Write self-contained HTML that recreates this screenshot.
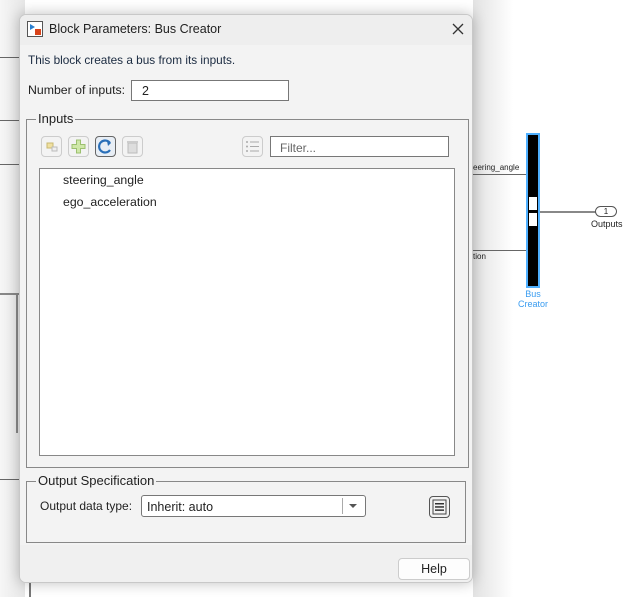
<!DOCTYPE html>
<html><head><meta charset="utf-8"><style>
*{box-sizing:border-box;margin:0;padding:0}
body{width:637px;height:597px;background:#fff;position:relative;overflow:hidden;font-family:"Liberation Sans",sans-serif;font-size:12px;color:#222}
.a{position:absolute}
.ln{position:absolute;background:#777}
.dlg{position:absolute;left:19px;top:14px;width:454px;height:569px;background:#f3f3f3;border:1px solid #c8c8c8;border-radius:7px;box-shadow:0 0 14px rgba(0,0,0,.25);overflow:hidden}
.title{position:absolute;left:0;top:0;width:100%;height:30px;background:#eeeeee}
.grp{position:absolute;border:1px solid #888}
.leg{position:absolute;background:#f3f3f3;font-size:13px;padding:0 2px;color:#222}
.inp{position:absolute;background:#fff;border:1px solid #777}
.tb{position:absolute;top:0;width:21px;height:21px;border:1px solid #ccc;border-radius:4px;background:#f3f3f3}
</style></head><body>
<div class="a" style="left:0;top:0;width:25px;height:597px;background:linear-gradient(90deg,#f6f6f6,#e6e6e6)"></div>
<div class="ln" style="left:0;top:57px;width:19px;height:1px;background:#666"></div>
<div class="ln" style="left:0;top:120px;width:19px;height:1px;background:#666"></div>
<div class="ln" style="left:0;top:164px;width:19px;height:1px;background:#666"></div>
<div class="ln" style="left:0;top:293px;width:19px;height:2px;background:#888"></div>
<div class="ln" style="left:16px;top:293px;width:2px;height:140px;background:#888"></div>
<div class="ln" style="left:0;top:479px;width:19px;height:1px;background:#666"></div>
<div class="ln" style="left:29px;top:583px;width:2px;height:14px;background:#777"></div>
<div class="a" style="left:473px;top:0;width:40px;height:597px;background:linear-gradient(90deg,#e2e2e2,#fff)"></div>
<div class="ln" style="left:473px;top:174px;width:55px;height:1px;background:#666"></div>
<div class="a" style="left:473px;top:163px;font-size:8px;color:#222">eering_angle</div>
<div class="ln" style="left:473px;top:250px;width:55px;height:1px;background:#666"></div>
<div class="a" style="left:473px;top:252px;font-size:8px;color:#222">tion</div>
<div class="a" style="left:526px;top:133px;width:14px;height:155px;background:#000;border:2px solid #4fb0ff"></div>
<div class="a" style="left:529px;top:197px;width:8px;height:13px;background:#fff"></div>
<div class="a" style="left:529px;top:213px;width:8px;height:13px;background:#fff"></div>
<div class="ln" style="left:540px;top:211px;width:56px;height:2px;background:#888"></div>
<div class="a" style="left:595px;top:206px;width:22px;height:11px;border:1px solid #555;border-radius:6px;background:#fff;font-size:8px;text-align:center;line-height:9px">1</div>
<div class="a" style="left:591px;top:219px;font-size:9px">Outputs</div>
<div class="a" style="left:517px;top:289px;width:32px;text-align:center;font-size:9px;color:#3a9cf0;line-height:10px">Bus<br>Creator</div>

<div class="dlg">
 <div class="title"></div>
 <svg class="a" style="left:7px;top:6px" width="16" height="16"><rect x="0.5" y="0.5" width="15" height="15" fill="#fff" stroke="#555"/><path d="M3 3 L8 6 L3 9Z" fill="#2a7fd0"/><rect x="8" y="8" width="6" height="6" fill="#d9431a"/></svg>
 <div class="a" style="left:29px;top:7px;font-size:12.5px">Block Parameters: Bus Creator</div>
 <svg class="a" style="left:432px;top:8px" width="12" height="12"><path d="M1 1L11 11M11 1L1 11" stroke="#333" stroke-width="1.3"/></svg>
 <div class="a" style="left:8px;top:38px;color:#1a2a40;font-size:11.8px">This block creates a bus from its inputs.</div>
 <div class="a" style="left:8px;top:68px;font-size:12.3px">Number of inputs:</div>
 <div class="inp" style="left:111px;top:65px;width:158px;height:21px;padding:3px 10px;font-size:12.5px">2</div>

 <div class="grp" style="left:6px;top:104px;width:443px;height:349px"></div>
 <div class="leg" style="left:16px;top:96px">Inputs</div>
 <div class="a" style="left:21px;top:121px;width:130px;height:22px">
  <div class="tb" style="left:0"><svg width="19" height="19"><rect x="5" y="6" width="6" height="5" fill="#f0e0a0" stroke="#c8b870"/><rect x="10" y="10" width="5" height="4" fill="#eee" stroke="#bbb"/></svg></div>
  <div class="tb" style="left:27px"><svg width="19" height="19"><path d="M7.5 3h4v4.5h4.5v4h-4.5v4.5h-4v-4.5h-4.5v-4h4.5z" fill="#cfe8a8" stroke="#9cc070"/></svg></div>
  <div class="tb" style="left:54px;border-color:#666;background:#e8eef5"><svg width="19" height="19"><path d="M14 6 A6 6 0 1 0 14 13" fill="none" stroke="#2a6fb8" stroke-width="2.2"/><path d="M11 4l4 2-3 3z" fill="#2a6fb8"/></svg></div>
  <div class="tb" style="left:81px"><svg width="19" height="19"><rect x="5" y="6" width="9" height="10" fill="#ddd" stroke="#bbb"/><rect x="4" y="4" width="11" height="2" fill="#ccc"/></svg></div>
 </div>
 <div class="tb" style="left:222px;top:121px;width:21px;height:21px"><svg width="19" height="19"><g fill="#aaa"><circle cx="4" cy="5" r="1"/><circle cx="4" cy="9.5" r="1"/><circle cx="4" cy="14" r="1"/><rect x="7" y="4.5" width="9" height="1"/><rect x="7" y="9" width="9" height="1"/><rect x="7" y="13.5" width="9" height="1"/></g></svg></div>
 <div class="inp" style="left:250px;top:121px;width:179px;height:21px;padding:4px 9px;color:#666">Filter...</div>
 <div class="inp" style="left:19px;top:153px;width:416px;height:288px;border-color:#888"></div>
 <div class="a" style="left:43px;top:158px;font-size:12.3px">steering_angle</div>
 <div class="a" style="left:43px;top:180px;font-size:12.3px">ego_acceleration</div>

 <div class="grp" style="left:6px;top:466px;width:440px;height:62px"></div>
 <div class="leg" style="left:16px;top:458px">Output Specification</div>
 <div class="a" style="left:20px;top:484px">Output data type:</div>
 <div class="inp" style="left:121px;top:480px;width:225px;height:22px;border-radius:3px;padding:4px 5px;font-size:12.5px">Inherit: auto</div>
 <div class="a" style="left:322px;top:483px;width:1px;height:16px;background:#aaa"></div>
 <svg class="a" style="left:328px;top:488px" width="10" height="6"><path d="M1 1h8l-4 4z" fill="#555"/></svg>
 <div class="a" style="left:409px;top:481px;width:21px;height:22px;border:1px solid #555;border-radius:4px;background:#f3f3f3"><svg width="19" height="20"><rect x="3" y="3" width="13" height="14" fill="none" stroke="#444"/><g fill="#333"><rect x="5" y="6" width="9" height="1.5"/><rect x="5" y="9.2" width="9" height="1.5"/><rect x="5" y="12.4" width="9" height="1.5"/></g></svg></div>

 <div class="a" style="left:0;top:530px;width:100%;height:40px;background:#f0f0f0"></div>
 <div class="a" style="left:378px;top:543px;width:72px;height:22px;background:#fdfdfd;border:1px solid #ccc;border-radius:4px;text-align:center;line-height:20px;font-size:12.5px">Help</div>
</div>
</body></html>
